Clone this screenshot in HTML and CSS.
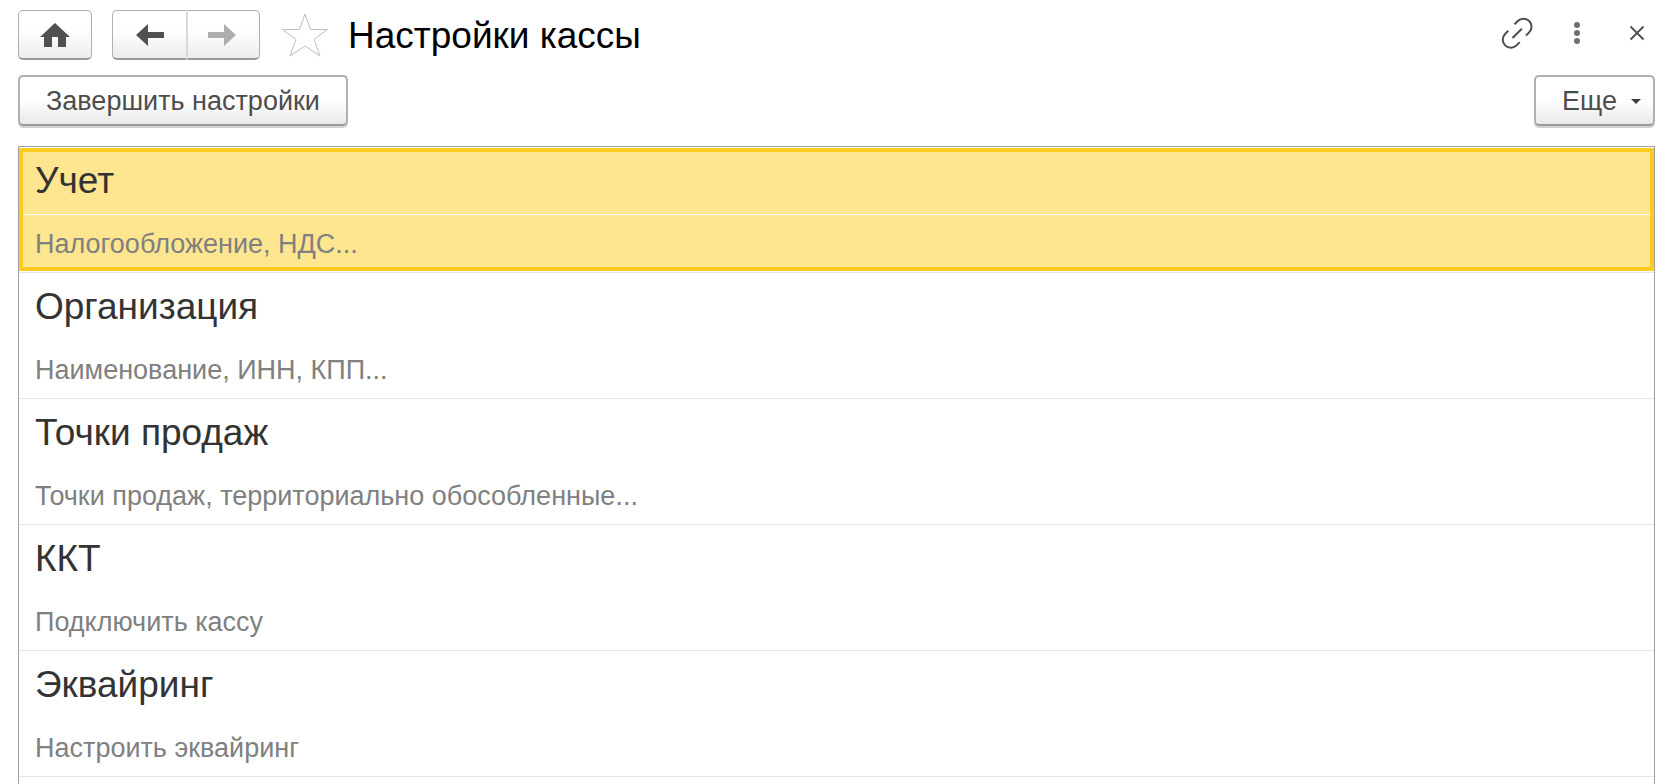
FILE: index.html
```html
<!DOCTYPE html>
<html lang="ru">
<head>
    <meta charset="UTF-8">
    <meta name="viewport" content="width=device-width, initial-scale=1.0">
    <title>Настройки кассы</title>
    <link rel="stylesheet" href="styles.css">
</head>
<body>
    <header class="header">
        <button type="button" class="nav-button" aria-label="Домой">
            <svg width="30" height="24" viewBox="0 0 30 24"><path d="M15 0 L30 14 H26 V24 H18 V14 H12 V24 H4 V14 H0 Z" fill="#505050"/></svg>
        </button>
        <div class="nav-group">
            <button type="button" class="nav-button" aria-label="Назад">
                <svg width="28" height="22" viewBox="0 0 28 22"><path d="M0 11 L12 0 V8 H28 V14 H12 V22 Z" fill="#505050"/></svg>
            </button>
            <button type="button" class="nav-button" aria-label="Вперед" disabled>
                <svg width="28" height="22" viewBox="0 0 28 22"><path d="M28 11 L16 0 V8 H0 V14 H16 V22 Z" fill="#adadad"/></svg>
            </button>
        </div>
        <button type="button" class="icon-button" aria-label="В избранное">
            <svg width="46" height="44" viewBox="0 0 46 44"><path d="M23 1 L28.5 16.5 H45.5 L32 26.5 L38 43 L23 33 L8 43 L14 26.5 L0.500 16.5 H17.500 Z" fill="none" stroke="#b9c0c5"/></svg>
        </button>
        <h1>Настройки кассы</h1>
        <div class="window-buttons">
            <button type="button" class="icon-button" aria-label="Получить ссылку">
                <svg width="32" height="32" viewBox="0 0 32 32" fill="none" stroke="#4d4d4d" stroke-width="2"><path d="M13.5 7.3 L16.8 4 A8 8 0 0 1 28.2 15.4 L25 18.500 M7.3 13.8 L4.1 17 A8 8 0 0 0 15.5 28.4 L18.8 25.100 M11.5 21 L20.8 11.700"/></svg>
            </button>
            <button type="button" class="icon-button" aria-label="Меню">
                <svg width="32" height="32" viewBox="0 0 32 32" fill="#707070"><circle cx="16" cy="8" r="3"/><circle cx="16" cy="16" r="3"/><circle cx="16" cy="24" r="3"/></svg>
            </button>
            <button type="button" class="icon-button" aria-label="Закрыть">
                <svg width="32" height="32" viewBox="0 0 32 32" fill="none" stroke="#4d4d4d" stroke-width="1.8"><path d="M9.500 9.500 L22.500 22.500 M22.500 9.500 L9.500 22.500"/></svg>
            </button>
        </div>
    </header>

    <div class="toolbar">
        <button type="button" class="button">Завершить настройки</button>
        <button type="button" class="button more">
            Еще
            <svg width="10" height="5" viewBox="0 0 10 5"><path d="M0 0 H10 L5 5 Z" fill="#404040"/></svg>
        </button>
    </div>

    <ul class="settings">
        <li class="selected">
            <h2>Учет</h2>
            <p>Налогообложение, НДС...</p>
        </li>
        <li>
            <h2>Организация</h2>
            <p>Наименование, ИНН, КПП...</p>
        </li>
        <li>
            <h2>Точки продаж</h2>
            <p>Точки продаж, территориально обособленные...</p>
        </li>
        <li>
            <h2>ККТ</h2>
            <p>Подключить кассу</p>
        </li>
        <li>
            <h2>Эквайринг</h2>
            <p>Настроить эквайринг</p>
        </li>
    </ul>
</body>
</html>
```
FILE: styles.css
```css
* {
    box-sizing: border-box;
}

body {
    margin: 0;
    padding: 10px 16px 0 18px;
    min-height: 100vh;
    display: flex;
    flex-direction: column;
    background-color: #fff;
    font-family: "Liberation Sans", Arial, sans-serif;
}

h1, h2, p, ul {
    margin: 0;
    padding: 0;
    font-weight: normal;
}

button {
    font-family: inherit;
    cursor: pointer;
}

svg {
    display: block;
}

.header {
    display: flex;
    align-items: center;
    height: 50px;
}

.nav-button {
    display: flex;
    align-items: center;
    justify-content: center;
    width: 74px;
    height: 50px;
    padding: 0;
    border: 1px solid #b0b0b0;
    border-bottom: 2px solid #999;
    border-radius: 5px;
    background: linear-gradient(#fff 40%, #ececec);
}

.nav-group {
    display: flex;
    margin: 0 22px 0 20px;
}

.nav-group .nav-button:first-child {
    border-right: 0;
    border-radius: 5px 0 0 5px;
}

.nav-group .nav-button:last-child {
    padding-right: 4px;
    border-left: 2px solid #d9d9d9;
    border-radius: 0 5px 5px 0;
}

.icon-button {
    padding: 0;
    border: 0;
    background: none;
}

h1 {
    margin-left: 20px;
    font-size: 37px;
    line-height: 48px;
    padding-top: 2px;
    color: #000;
}

.window-buttons {
    display: flex;
    gap: 28px;
    margin: 0 2px 4px auto;
}

.toolbar {
    display: flex;
    justify-content: space-between;
    margin: 15px 0 20px;
}

.button {
    height: 51px;
    padding: 2px 26px 0;
    border: 2px solid #b0b0b0;
    border-bottom-color: #999;
    border-radius: 5px;
    background: linear-gradient(#fff 50%, #e8e8e8);
    box-shadow: 0 2px 0 #d2d2d2;
    font-size: 27px;
    color: #4d4d4d;
}

.more {
    display: flex;
    align-items: center;
    gap: 14px;
    padding-right: 12px;
}

.settings {
    flex: 1;
    border: 1px solid #a0a0a0;
    border-bottom: 0;
    list-style: none;
}

.settings li {
    position: relative;
    border-bottom: 1px solid #e5e5e5;
}

.settings h2 {
    padding: 0 16px;
    border-bottom: 1px solid transparent;
    font-size: 37px;
    line-height: 67px;
    color: #333;
}

.settings p {
    padding: 2px 16px 0;
    font-size: 27px;
    line-height: 55px;
    color: #808080;
}

.settings .selected {
    background-color: #fee590;
}

.selected h2 {
    border-bottom-color: #fff;
}

/* selection frame */
.selected::after {
    content: '';
    position: absolute;
    inset: 0;
    border: solid #fff;
    border-width: 1px 0;
    box-shadow: inset 0 0 0 4px #facc20;
}
```
